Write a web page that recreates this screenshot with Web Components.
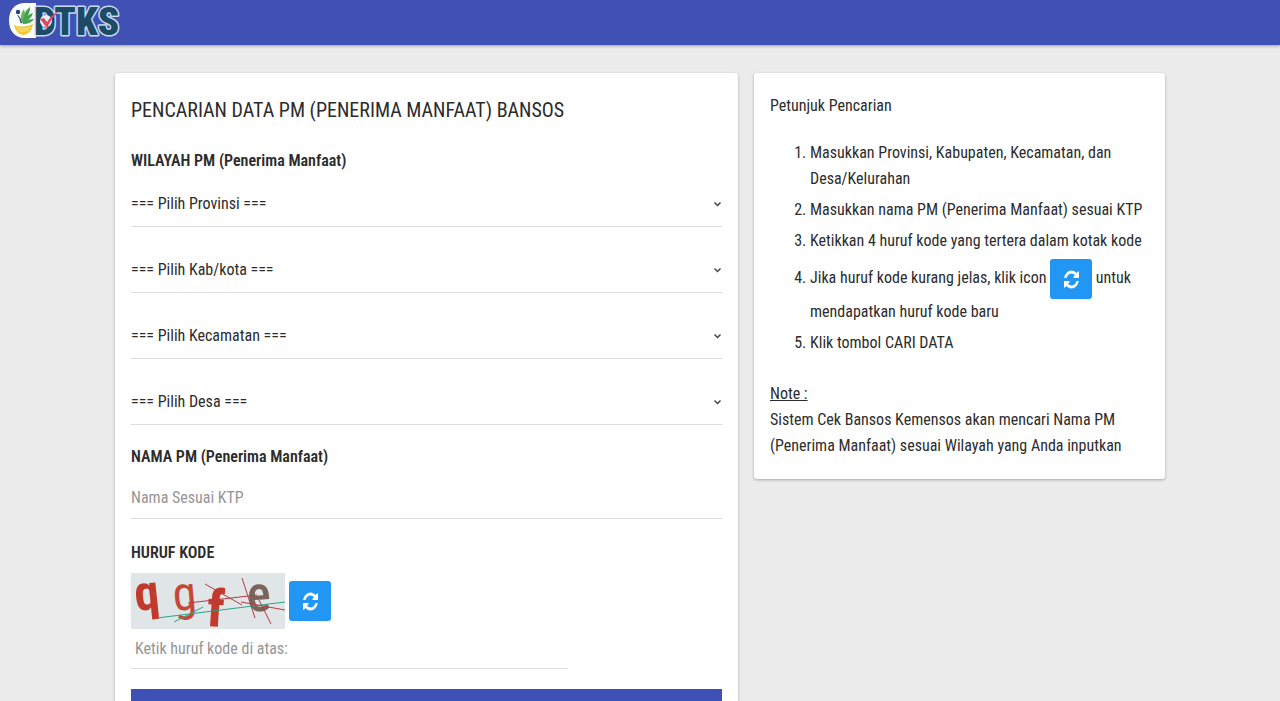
<!DOCTYPE html>
<html lang="id">
<head>
<meta charset="utf-8">
<meta name="viewport" content="width=device-width, initial-scale=1">
<title>Cek Bansos</title>
<style>
  body {
    margin: 0;
    background: #ececec;
    color: #2c2c2c;
    font: 16px/26px "Roboto Condensed", "Liberation Sans Narrow", Roboto, sans-serif;
    --primary: #3f51b5;
    --accent: #2196f3;
    --line: #dcdcdc;
    --muted: #959595;
  }
</style>
</head>
<body>
<bansos-page></bansos-page>

<script>
const define = (name, html, setup) => {
  const template = document.createElement('template');
  template.innerHTML = html;
  customElements.define(name, class extends HTMLElement {
    constructor() {
      super();
      this.attachShadow({ mode: 'open' }).append(template.content.cloneNode(true));
    }
    connectedCallback() {
      if (setup) setup(this, this.shadowRoot);
    }
  });
};

define('dtks-logo', `
  <style>
    :host { display: block; }
    svg { display: block; overflow: visible; }
    text { font: 900 39px "Roboto Condensed", Roboto, sans-serif; fill: #1d4b66; stroke: #c9dcee; stroke-width: 3px; paint-order: stroke; stroke-linejoin: round; }
  </style>
  <svg width="112" height="38" viewBox="0 0 112 38" role="img" aria-label="DTKS">
    <path d="M17 1H28V36H17C6 36 1 28 1 18.500S6 1 17 1Z" fill="#fbfdfa"/>
    <circle cx="10" cy="10" r="2.200" fill="#28417c"/>
    <path d="M9 13Q12 13 14 21Q12 22 12 19Q11 15 9 13Z" fill="#28417c"/>
    <path d="M14 20Q15 10 22 5Q23 11 15 20Q18 13 25 11Q24 16 16 21Q19 17 26 17Q23 22 15 22Z" fill="#43a354"/>
    <path d="M13 20Q12 12 16 7Q18 12 14 20Z" fill="#65b550"/>
    <path d="M6 23Q15 27 25 22Q23 33 15 33Q8 32 6 23Z" fill="#f4c62c"/>
    <path d="M8 25Q15 29 23 25M9 28Q15 31 21 28" fill="none" stroke="#fff0a0" stroke-width=".8"/>
    <text x="26" y="33">DTKS</text>
    <circle cx="38" cy="19" r="6" fill="#e8eef4"/>
    <path d="M32 17L36 16L39 20Q44 12 51 9Q44 15 39 26Z" fill="#e4435a"/>
  </svg>`);

define('app-bar', `
  <style>
    :host { display: block; background: var(--primary); box-shadow: 0 1px 3px rgba(0,0,0,.35); }
    header { display: flex; align-items: center; min-height: 45px; box-sizing: border-box; padding: 0 8px 4px; }
  </style>
  <header><slot></slot></header>`);

define('panel-card', `
  <style>
    :host { display: block; background: #fff; border-radius: 3px; padding: 20px 16px; box-shadow: 0 1px 3px rgba(0,0,0,.3); }
  </style>
  <slot></slot>`);

define('refresh-button', `
  <style>
    :host { display: inline-block; vertical-align: middle; }
    button { display: flex; align-items: center; justify-content: center; width: 42px; height: 40px; padding: 0; border: 0; border-radius: 3px; background: var(--accent); cursor: pointer; }
  </style>
  <button type="button" aria-label="Muat ulang kode">
    <svg width="15" height="21" viewBox="0 0 1536 1792" preserveAspectRatio="none" fill="#fff" aria-hidden="true"><path d="M1511 1056q0 5-1 7-64 268-268 434.500t-478 166.500q-146 0-282.500-55t-243.500-157l-129 129q-19 19-45 19t-45-19-19-45v-448q0-26 19-45t45-19h448q26 0 45 19t19 45-19 45l-137 137q71 66 161 102t187 36q134 0 250-65t186-179q11-17 53-117 8-23 30-23h192q13 0 22.500 9.500t9.500 22.500zm25-800v448q0 26-19 45t-45 19h-448q-26 0-45-19t-19-45 19-45l138-138q-148-137-349-137-134 0-250 65t-186 179q-11 17-53 117-8 23-30 23h-199q-13 0-22.500-9.500t-9.500-22.500v-7q65-268 270-434.500t480-166.500q146 0 284 55.500t245 156.500l130-129q19-19 45-19t45 19 19 45z"/></svg>
  </button>`);

define('select-field', `
  <style>
    :host { display: grid; align-items: center; height: 45px; border-bottom: 1px solid var(--line); }
    select, svg { grid-area: 1 / 1; }
    select { appearance: none; width: 100%; height: 45px; margin: 0; padding: 0 20px 0 0; border: 0; background: none; color: inherit; font: inherit; }
    svg { justify-self: end; pointer-events: none; }
  </style>
  <select><option></option></select>
  <svg width="9" height="8" viewBox="0 0 9 8" aria-hidden="true"><path d="M1.500 2.500L4.500 5.500L7.500 2.500" fill="none" stroke="#444" stroke-width="1.500"/></svg>`,
  (host, root) => {
    const name = host.getAttribute('name');
    root.querySelector('select').setAttribute('aria-label', name);
    root.querySelector('option').textContent = '=== Pilih ' + name + ' ===';
  });

define('text-field', `
  <style>
    :host { display: block; margin-top: 20px; }
    label { display: block; margin-bottom: 8px; line-height: 24px; font-weight: 600; }
    input { display: block; box-sizing: border-box; width: 100%; height: 42px; padding: 0; border: 0; border-bottom: 1px solid var(--line); background: none; color: inherit; font: inherit; }
    input::placeholder { color: var(--muted); opacity: 1; }
  </style>
  <label for="field"></label>
  <input id="field" type="text">`,
  (host, root) => {
    root.querySelector('label').textContent = host.getAttribute('label');
    root.querySelector('input').placeholder = host.getAttribute('hint');
  });

define('captcha-image', `
  <style>
    :host { display: block; }
    svg { display: block; overflow: visible; background: #e0e6e8; }
    text { font-family: "Open Sans", sans-serif; }
    .narrow { font-family: "Roboto Condensed", Roboto, sans-serif; }
    path { fill: none; stroke-width: 1; }
  </style>
  <svg width="154" height="56" viewBox="0 0 154 56">
    <text class="narrow" transform="translate(5 38) rotate(-6)" font-size="50" font-weight="700" fill="#c23a2b">q</text>
    <text class="narrow" transform="translate(43 38) rotate(-5)" font-size="48" font-weight="400" fill="#c64735">g</text>
    <text class="narrow" transform="translate(75 53) rotate(4)" font-size="52" font-weight="800" fill="#c23a2b">f</text>
    <text class="narrow" transform="translate(117 39) rotate(-4)" font-size="50" font-weight="500" fill="#79655b">e</text>
    <path d="M26 45L154 29M43 49L72 34" stroke="#2aa387"/>
    <path d="M57 30L126 22M74 11L111 32M111 5L124 45M110 29L154 37M128 27L140 51" stroke="#b63b3d"/>
  </svg>`);

define('captcha-field', `
  <style>
    :host { display: block; margin-top: 22px; }
    label { display: block; margin-bottom: 8px; line-height: 24px; font-weight: 600; }
    .code { display: flex; align-items: center; gap: 4px; }
    input { display: block; box-sizing: border-box; width: 74%; height: 40px; padding: 0 4px; border: 0; border-bottom: 1px solid var(--line); background: none; color: inherit; font: inherit; }
    input::placeholder { color: var(--muted); opacity: 1; }
  </style>
  <label for="code">HURUF KODE</label>
  <div class="code"><captcha-image></captcha-image><refresh-button></refresh-button></div>
  <input id="code" type="text" placeholder="Ketik huruf kode di atas:">`);

define('search-form', `
  <style>
    :host { display: block; padding-top: 5px; }
    h1 { margin: 0 0 27px; font-size: 20px; line-height: 24px; font-weight: 400; }
    fieldset { min-width: 0; margin: 0; padding: 0; border: 0; }
    legend { padding: 0; margin-bottom: 8px; line-height: 24px; font-weight: 600; }
    .fields { display: grid; gap: 20px; }
    .submit { display: block; width: 100%; margin: 20px 0 0; padding: 16px; border: 0; background: var(--primary); color: #fff; font: inherit; line-height: 20px; cursor: pointer; }
  </style>
  <form>
    <h1>PENCARIAN DATA PM (PENERIMA MANFAAT) BANSOS</h1>
    <fieldset>
      <legend>WILAYAH PM (Penerima Manfaat)</legend>
      <div class="fields">
        <select-field name="Provinsi"></select-field>
        <select-field name="Kab/kota"></select-field>
        <select-field name="Kecamatan"></select-field>
        <select-field name="Desa"></select-field>
      </div>
    </fieldset>
    <text-field label="NAMA PM (Penerima Manfaat)" hint="Nama Sesuai KTP"></text-field>
    <captcha-field></captcha-field>
    <button class="submit" type="button">CARI DATA</button>
  </form>`);

define('search-guide', `
  <style>
    :host { display: block; }
    h2 { margin: 0; font: inherit; }
    ol { display: grid; gap: 5px; margin: 21px 0 25px; padding-left: 40px; }
    p { margin: 0; }
  </style>
  <h2>Petunjuk Pencarian</h2>
  <ol>
    <li>Masukkan Provinsi, Kabupaten, Kecamatan, dan Desa/Kelurahan</li>
    <li>Masukkan nama PM (Penerima Manfaat) sesuai KTP</li>
    <li>Ketikkan 4 huruf kode yang tertera dalam kotak kode</li>
    <li>Jika huruf kode kurang jelas, klik icon <refresh-button></refresh-button> untuk mendapatkan huruf kode baru</li>
    <li>Klik tombol CARI DATA</li>
  </ol>
  <p><u>Note :</u></p>
  <p>Sistem Cek Bansos Kemensos akan mencari Nama PM (Penerima Manfaat) sesuai Wilayah yang Anda inputkan</p>`);

define('bansos-page', `
  <style>
    :host { display: block; }
    main { display: grid; grid-template-columns: minmax(0, 1fr) 411px; gap: 16px; align-items: start; max-width: 1050px; margin: 0 auto; padding: 28px 16px; }
    @media (max-width: 900px) { main { grid-template-columns: minmax(0, 1fr); } }
  </style>
  <app-bar><dtks-logo></dtks-logo></app-bar>
  <main>
    <panel-card><search-form></search-form></panel-card>
    <panel-card><search-guide></search-guide></panel-card>
  </main>`);
</script>
</body>
</html>
